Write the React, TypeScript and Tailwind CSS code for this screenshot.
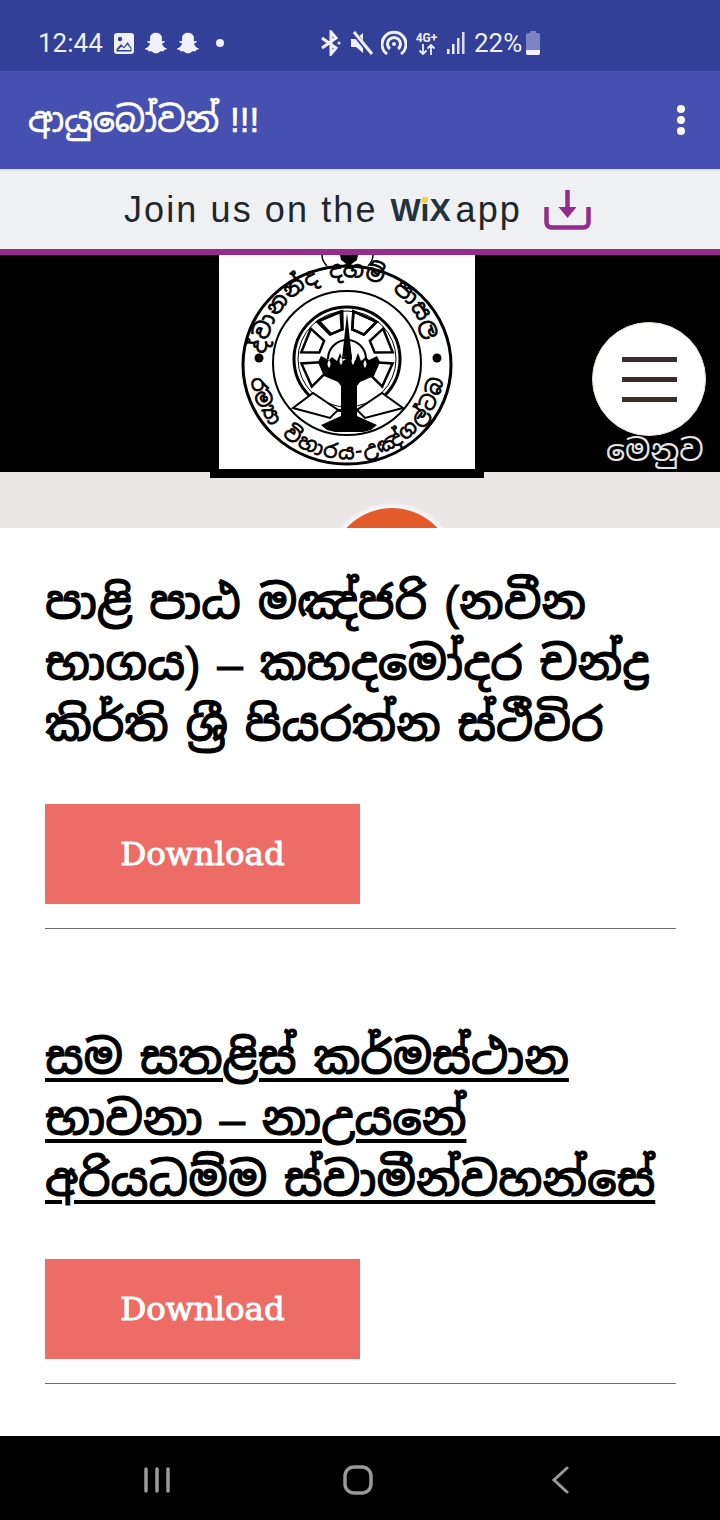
import { FaSnapchatGhost } from "react-icons/fa";

const sinhala = "font-['Liberation_Sans','Noto_Sans_Sinhala','Noto_Sans',sans-serif]";

// one block of the dharma wheel, angles in degrees
const wheelBlock = (mid: number) => {
  const cx = 128;
  const cy = 102;
  const pt = (r: number, deg: number) => {
    const a = (deg * Math.PI) / 180;
    return `${(cx + r * Math.cos(a)).toFixed(1)} ${(cy + r * Math.sin(a)).toFixed(1)}`;
  };
  return `M${pt(28, mid - 13)}L${pt(46, mid - 16)}L${pt(46, mid + 16)}L${pt(28, mid + 13)}Z`;
};

const StatusIcons = () => (
  <div className="h-[71px] bg-[#324097] flex items-center pl-[38px] pt-[15px] text-[#eef0fa] font-['Roboto',sans-serif]">
    <span className="w-[76px] text-[26px] leading-none">12:44</span>
    <svg width="20" height="21" viewBox="0 0 20 21">
      <rect x="0" y="0" width="20" height="21" rx="3" fill="#eef0fa" />
      <circle cx="6" cy="6" r="2.2" fill="#324097" />
      <path d="M2.5 16l4.5-5 3 3 3.5-5 4 6v3.500h-15z" fill="#324097" />
      <path d="M4 17l3.500-3.500 2.500 2 3.500-4 3 4v1.500z" fill="#eef0fa" />
    </svg>
    <FaSnapchatGhost className="ml-[11px] w-[22px] h-[22px]" />
    <FaSnapchatGhost className="ml-[10px] w-[22px] h-[22px]" />
    <span className="ml-[17px] w-[8px] h-[8px] rounded-full bg-[#eef0fa]" />
    <svg className="ml-[97px]" width="20" height="26" viewBox="0 0 20 26" fill="none" stroke="#eef0fa" strokeWidth="3">
      <path d="M1 8l14 10-5 6V2l5 6L1 18" />
      <circle cx="18" cy="13" r="1.500" fill="#eef0fa" stroke="none" />
    </svg>
    <svg className="ml-[10px]" width="22" height="24" viewBox="0 0 22 24">
      <path d="M0 8h5l7-6v20l-7-6H0z" fill="#eef0fa" />
      <path d="M2 1l18 22" stroke="#324097" strokeWidth="5" />
      <path d="M3 1l18 22" stroke="#eef0fa" strokeWidth="3" />
    </svg>
    <svg className="ml-[8px]" width="26" height="26" viewBox="0 0 26 26" fill="none" stroke="#eef0fa" strokeWidth="3">
      <path d="M6 24a12 12 0 1 1 14 0" />
      <path d="M9 19a6.500 6.500 0 1 1 8 0" />
      <circle cx="13" cy="14" r="2" fill="#eef0fa" stroke="none" />
    </svg>
    <div className="ml-[8px] w-[23px] flex flex-col items-center text-[12px] leading-[12px] font-bold">
      <span>4G+</span>
      <svg width="18" height="11" viewBox="0 0 18 11" fill="none" stroke="#eef0fa" strokeWidth="1.800">
        <path d="M5 0v10M1.500 6.500L5 10l3.500-3.500M13 11V1M9.500 4.500L13 1l3.500 3.500" />
      </svg>
    </div>
    <svg className="ml-[9px]" width="19" height="22" viewBox="0 0 19 22" fill="#eef0fa">
      <rect x="0" y="17" width="2.500" height="5" />
      <rect x="5" y="12" width="2.500" height="10" />
      <rect x="10" y="6" width="2.500" height="16" opacity="0.9" />
      <rect x="15" y="0" width="2.500" height="22" opacity="0.9" />
    </svg>
    <span className="ml-[8px] text-[26px] leading-none">22%</span>
    <svg className="ml-[4px]" width="14" height="24" viewBox="0 0 14 24">
      <path d="M4 0h6v2h2a2 2 0 0 1 2 2v18a2 2 0 0 1-2 2H2a2 2 0 0 1-2-2V4a2 2 0 0 1 2-2h2z" fill="#7a84c6" />
      <path d="M0 19h14v3a2 2 0 0 1-2 2H2a2 2 0 0 1-2-2z" fill="#eef0fa" />
    </svg>
  </div>
);

const Seal = () => (
  <svg className="overflow-visible" width="256" height="214" viewBox="0 0 256 214">
    <path d="M103 0c0 4 2 8 5 11M154 0c0 4-2 8-5 11" fill="none" stroke="#000" strokeWidth="1.500" />
    <path d="M121 0h18l-1 5-8 6-8-6z" fill="#000" />
    <g fill="none" stroke="#000">
      <ellipse cx="128" cy="110" rx="104" ry="99" strokeWidth="3" />
      <ellipse cx="128" cy="108" rx="74" ry="72" strokeWidth="2" />
      <ellipse cx="128" cy="104" rx="53" ry="52" strokeWidth="3" />
      <ellipse cx="128" cy="104" rx="49" ry="48" strokeWidth="1" />
      <path d="M109 104a19 19 0 0 1 38 0" strokeWidth="2" />
      {[-112, -66, -22, 24, 156, 202, 246, 294].map((a) => (
        <path key={a} d={wheelBlock(a)} strokeWidth="2.500" />
      ))}
    </g>
    <defs>
      <path id="sealTop" d="M47 103a81 81 0 0 1 162 0" />
      <path id="sealBottom" d="M31 112a97 92 0 0 0 194 0" />
    </defs>
    <text fontSize="22" fontFamily="'Noto Sans Sinhala','Noto Sans',sans-serif" fill="#000" stroke="#000" strokeWidth="0.800">
      <textPath href="#sealTop" textLength="232" startOffset="4">ද්වානන්ද දහම් පාසල</textPath>
    </text>
    <text fontSize="20" fontFamily="'Noto Sans Sinhala','Noto Sans',sans-serif" fill="#000" stroke="#000" strokeWidth="0.800">
      <textPath href="#sealBottom" textLength="272" startOffset="12">රම්‍යා විහාරය-උඤ්ගල්ටබ</textPath>
    </text>
    <circle cx="40" cy="103" r="4.500" fill="#000" />
    <circle cx="218" cy="103" r="4.500" fill="#000" />
    <path d="M74 153l20-15 25 17-8 8zM184 153l-21-15-25 17 8 8z" fill="#fff" stroke="#000" strokeWidth="2" />
    <path d="M128 58l2 26 3 20 3 2 3-8 3 8 5-4 3 3 8-4 3 6-6 14-14 6-3 4v30l20 9-6 5-8 2h-28l-8-2-6-5 20-9v-30l-3-4-14-6-6-14 3-6 8 4 3-3 5 4 3-8 3 8 3-2 3-20z" fill="#000" />
    <path d="M128 58l5 46h-10z" fill="#000" />
    <path d="M110 113q3-4 0-8-3 4 0 8zM122 110q3-4 0-8-3 4 0 8zM134 110q3-4 0-8-3 4 0 8zM146 113q3-4 0-8-3 4 0 8z" fill="#fff" />
  </svg>
);

const Entry = ({ lines, underline }: { lines: string[]; underline?: boolean }) => (
  <div>
    <h2 className={`${sinhala} text-[46px] leading-[61px] font-medium text-black [word-spacing:4px] [-webkit-text-stroke:1px_black]`}>
      {lines.map((line) => (
        <div key={line} className={underline ? "underline decoration-[4px] underline-offset-[4px]" : ""}>
          {line}
        </div>
      ))}
    </h2>
    <button
      type="button"
      className="block mt-[48px] w-[315px] h-[100px] bg-[#ee6c66] text-white text-[32.5px] font-['DejaVu_Serif',serif] [-webkit-text-stroke:1px_white]"
    >
      Download
    </button>
    <div className="mt-[24px] h-px bg-[#6f6f6f]" />
  </div>
);

export default function App() {
  return (
    <div className="w-[720px] h-[1520px] flex flex-col bg-white overflow-hidden font-['Noto_Sans',sans-serif]">
      <StatusIcons />

      <div className={`${sinhala} h-[98px] bg-[#4650b0] text-white pl-[28px] pr-[35px] flex items-center justify-between`}>
        <span className="text-[35px] [word-spacing:1px] [-webkit-text-stroke:0.6px_white]">ආයුබෝවන් !!!</span>
        <div className="flex flex-col gap-[3px]">
          <span className="w-[8px] h-[8px] rounded-full bg-white" />
          <span className="w-[8px] h-[8px] rounded-full bg-white" />
          <span className="w-[8px] h-[8px] rounded-full bg-white" />
        </div>
      </div>

      <div className="h-[80px] bg-[#eff0f2] flex items-center pl-[124px] pt-[1px] font-['Liberation_Sans',sans-serif] text-[#20272c] text-[36px] shadow-[inset_0_3px_3px_-2px_rgba(0,0,0,0.12)]">
        <span className="tracking-[2.1px]">Join us on the</span>
        <span className="relative ml-[13px] w-[60px] text-[32px] font-bold text-[#22333f] leading-none">
          WiX
          <span className="absolute left-[31px] top-[3px] w-[5px] h-[6px] bg-[#f4d04e] -skew-x-12" />
        </span>
        <span className="ml-[5px] tracking-[2.1px]">app</span>
        <svg className="ml-[22px]" width="47" height="40" viewBox="0 0 47 40" fill="none" stroke="#952b8c" strokeWidth="4.500">
          <path d="M2.500 17v15.500a5 5 0 0 0 5 5h32a5 5 0 0 0 5-5V17" />
          <path d="M23.500 0v20" />
          <path d="M14.500 17h18l-9 11z" fill="#952b8c" stroke="none" />
        </svg>
      </div>
      <div className="h-[6px] bg-[#952b8c]" />

      <div className="relative h-[217px] bg-black">
        <div className="ml-[210px] w-[274px] h-[223px] bg-black pl-[9px]">
          <div className="w-[256px] h-[214px] bg-white">
            <Seal />
          </div>
        </div>
        <div className="absolute left-[592px] top-[67px] w-[114px] h-[114px] rounded-full bg-white border border-[#e5e1d6] flex flex-col items-center justify-center gap-[15px]">
          <span className="w-[55px] h-[5px] bg-[#3a2e2b]" />
          <span className="w-[55px] h-[5px] bg-[#3a2e2b]" />
          <span className="w-[55px] h-[5px] bg-[#3a2e2b]" />
        </div>
        <span className={`${sinhala} absolute left-[606px] top-[176px] text-[30px] leading-[40px] text-[#e4e4e4]`}>මෙනුව</span>
      </div>

      <div className="h-[56px] bg-[#ebe7e7] overflow-hidden pl-[330px] pt-[36px]">
        <div className="w-[124px] h-[124px] rounded-full bg-[#e35a2b] shadow-[0_0_4px_3px_rgba(255,255,255,0.8)]" />
      </div>

      <div className="flex-1 pl-[45px] pr-[44px] pt-[45px]">
        <Entry lines={["පාළි පාඨ මඤ්‍ජරි (නවීන", "භාගය) – කහදමෝදර චන්ද්‍ර", "කිර්ති ශ්‍රී පියරත්න ස්ථීවිර"]} />
        <div className="mt-[99px]">
          <Entry underline lines={["සම සතළිස් කර්මස්ථාන", "භාවනා – නාඋයනේ", "අරියධම්ම ස්වාමීන්වහන්සේ"]} />
        </div>
      </div>

      <div className="h-[84px] bg-black flex items-center pt-[4px]">
        <svg className="ml-[144px]" width="26" height="26" viewBox="0 0 26 26" stroke="#9a9a9a" strokeWidth="3.500" strokeLinecap="round">
          <path d="M2 2v22M13 2v22M24 2v22" />
        </svg>
        <svg className="ml-[173px]" width="30" height="30" viewBox="0 0 30 30" fill="none" stroke="#9a9a9a" strokeWidth="3.500">
          <rect x="2" y="2" width="26" height="26" rx="9" />
        </svg>
        <svg className="ml-[178px]" width="18" height="28" viewBox="0 0 18 28" fill="none" stroke="#9a9a9a" strokeWidth="3" strokeLinecap="round">
          <path d="M16 2L3 14l13 12" />
        </svg>
      </div>
    </div>
  );
}
